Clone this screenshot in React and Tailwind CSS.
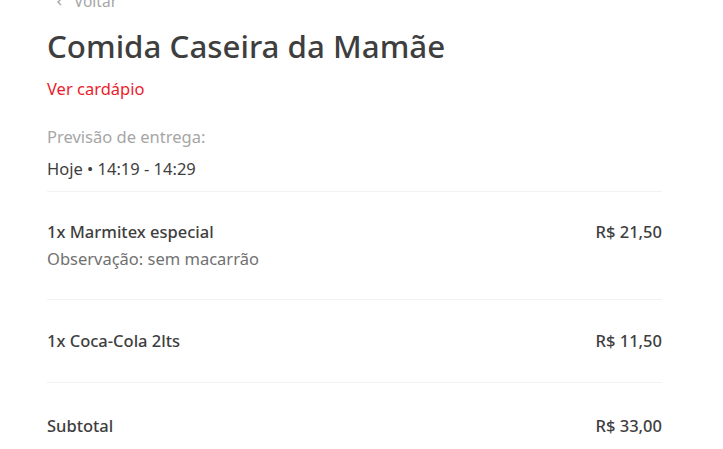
export default function App() {
  return (
    <div className="min-h-[449px] bg-white text-[#3e3e3e]" style={{ fontFamily: '"Noto Sans", sans-serif' }}>
      <div className="ml-[47px] w-[615px]">
        <div className="-mt-[9px] flex h-[22px] items-center pl-[8px] text-[#a6a6a6]">
          <svg width="10" height="10" viewBox="0 0 10 10" className="mr-[9px]">
            <path d="M6 2 L3 5 L6 8" fill="none" stroke="#a6a6a6" strokeWidth="1.4" />
          </svg>
          <span className="text-[15.5px]">Voltar</span>
        </div>
        <h1 className="mt-[14px] text-[31.3px] leading-[38px] font-medium text-[#3e3e3e]">Comida Caseira da Mamãe</h1>
        <div className="mt-[14px] text-[16.5px] leading-[20px] text-[#ea1d2c]">Ver cardápio</div>
        <div className="mt-[27px] text-[16.5px] leading-[22px] text-[#a6a6a6]">Previsão de entrega:</div>
        <div className="mt-[10px] text-[16.5px] leading-[22px] text-[#3e3e3e]">Hoje • 14:19 - 14:29</div>
        <div className="mt-[11px] h-px bg-[#f2f2f2]" />
        <div className="flex justify-between pt-[29px] pb-[29px]">
          <div>
            <div className="text-[16.5px] leading-[22px] font-medium">1x Marmitex especial</div>
            <div className="mt-[5px] text-[16.5px] leading-[22px] text-[#717171]">Observação: sem macarrão</div>
          </div>
          <div className="text-[16.5px] leading-[22px] font-medium">R$ 21,50</div>
        </div>
        <div className="h-px bg-[#f2f2f2]" />
        <div className="flex justify-between pt-[30px] pb-[30px]">
          <div className="text-[16.5px] leading-[22px] font-medium">1x Coca-Cola 2lts</div>
          <div className="text-[16.5px] leading-[22px] font-medium">R$ 11,50</div>
        </div>
        <div className="h-px bg-[#f2f2f2]" />
        <div className="flex justify-between pt-[32px]">
          <div className="text-[16.5px] leading-[22px] font-medium">Subtotal</div>
          <div className="text-[16.5px] leading-[22px] font-medium">R$ 33,00</div>
        </div>
      </div>
    </div>
  );
}
